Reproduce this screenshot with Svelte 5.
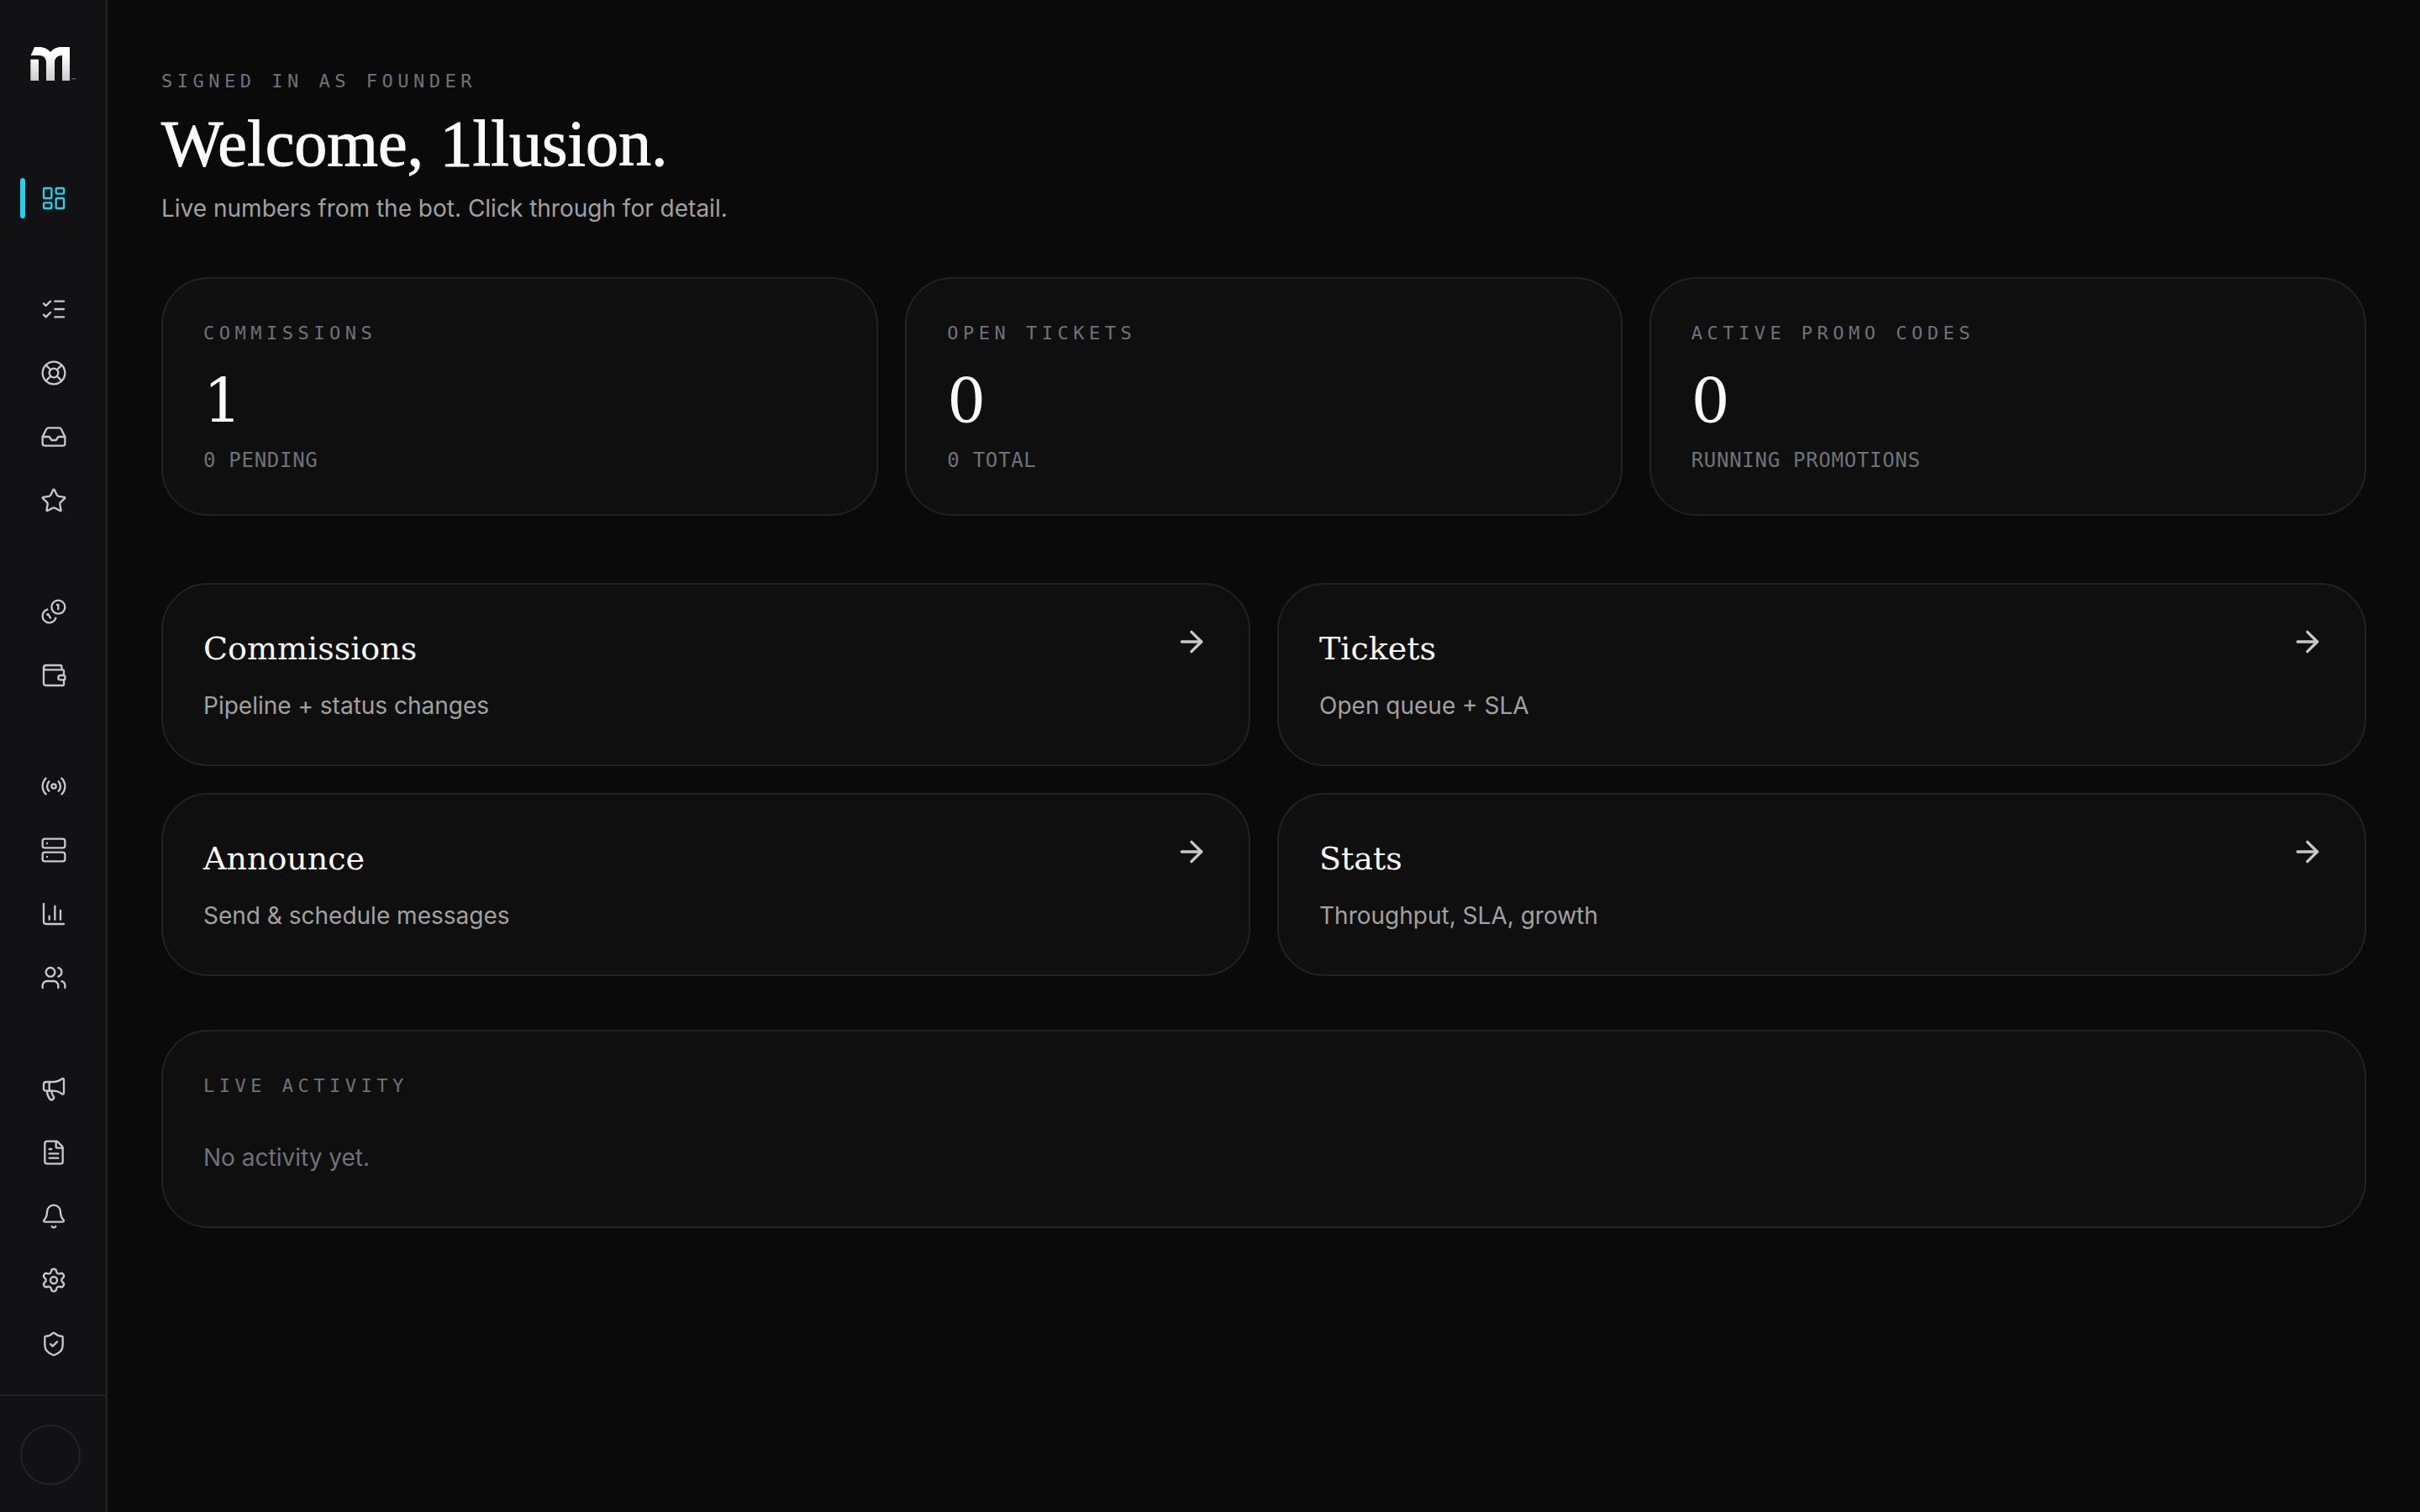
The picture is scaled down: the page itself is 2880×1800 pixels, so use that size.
<script lang="ts">
  type Item = { label: string; href: string; paths: string[] };

  // 24x24 stroke icons, grouped the way the sidebar shows them
  const groups: Item[][] = [
    [
      {
        label: "Dashboard",
        href: "#dashboard",
        paths: [
          "M4 3h5a1 1 0 0 1 1 1v7a1 1 0 0 1-1 1H4a1 1 0 0 1-1-1V4a1 1 0 0 1 1-1z",
          "M15 3h5a1 1 0 0 1 1 1v3a1 1 0 0 1-1 1h-5a1 1 0 0 1-1-1V4a1 1 0 0 1 1-1z",
          "M15 12h5a1 1 0 0 1 1 1v7a1 1 0 0 1-1 1h-5a1 1 0 0 1-1-1v-7a1 1 0 0 1 1-1z",
          "M4 16h5a1 1 0 0 1 1 1v3a1 1 0 0 1-1 1H4a1 1 0 0 1-1-1v-3a1 1 0 0 1 1-1z",
        ],
      },
    ],
    [
      {
        label: "Commissions",
        href: "#commissions",
        paths: ["M13 5h8", "M13 12h8", "M13 19h8", "m3 17 2 2 4-4", "m3 7 2 2 4-4"],
      },
      {
        label: "Tickets",
        href: "#tickets",
        paths: [
          "M2 12a10 10 0 1 0 20 0a10 10 0 1 0-20 0",
          "m4.93 4.93 4.24 4.24",
          "m14.83 9.17 4.24-4.24",
          "m14.83 14.83 4.24 4.24",
          "m9.17 14.83-4.24 4.24",
          "M8 12a4 4 0 1 0 8 0a4 4 0 1 0-8 0",
        ],
      },
      {
        label: "Inbox",
        href: "#inbox",
        paths: [
          "M22 12h-6l-2 3h-4l-2-3H2",
          "M5.45 5.11 2 12v6a2 2 0 0 0 2 2h16a2 2 0 0 0 2-2v-6l-3.45-6.89A2 2 0 0 0 16.76 4H7.24a2 2 0 0 0-1.79 1.11z",
        ],
      },
      {
        label: "Reviews",
        href: "#reviews",
        paths: [
          "M11.525 2.295a.53.53 0 0 1 .95 0l2.31 4.679a2.123 2.123 0 0 0 1.595 1.16l5.166.756a.53.53 0 0 1 .294.904l-3.736 3.638a2.123 2.123 0 0 0-.611 1.878l.882 5.14a.53.53 0 0 1-.771.56l-4.618-2.428a2.122 2.122 0 0 0-1.973 0L6.396 21.01a.53.53 0 0 1-.77-.56l.881-5.139a2.122 2.122 0 0 0-.611-1.879L2.16 9.795a.53.53 0 0 1 .294-.906l5.165-.755a2.122 2.122 0 0 0 1.597-1.16z",
        ],
      },
    ],
    [
      {
        label: "Earnings",
        href: "#earnings",
        paths: [
          "M13.744 17.736a6 6 0 1 1-7.48-7.48",
          "M15 6h1v4",
          "m6.134 14.768.866-.5 2 3.464",
          "M10 8a6 6 0 1 0 12 0a6 6 0 1 0-12 0",
        ],
      },
      {
        label: "Wallet",
        href: "#wallet",
        paths: [
          "M19 7V4a1 1 0 0 0-1-1H5a2 2 0 0 0 0 4h15a1 1 0 0 1 1 1v4h-3a2 2 0 0 0 0 4h3a1 1 0 0 0 1-1v-2a1 1 0 0 0-1-1",
          "M3 5v14a2 2 0 0 0 2 2h15a1 1 0 0 0 1-1v-4",
        ],
      },
    ],
    [
      {
        label: "Live",
        href: "#live",
        paths: [
          "M16.247 7.761a6 6 0 0 1 0 8.478",
          "M19.075 4.933a10 10 0 0 1 0 14.134",
          "M4.925 19.067a10 10 0 0 1 0-14.134",
          "M7.753 16.239a6 6 0 0 1 0-8.478",
          "M10 12a2 2 0 1 0 4 0a2 2 0 1 0-4 0",
        ],
      },
      {
        label: "Servers",
        href: "#servers",
        paths: [
          "M4 2h16a2 2 0 0 1 2 2v4a2 2 0 0 1-2 2H4a2 2 0 0 1-2-2V4a2 2 0 0 1 2-2z",
          "M4 14h16a2 2 0 0 1 2 2v4a2 2 0 0 1-2 2H4a2 2 0 0 1-2-2v-4a2 2 0 0 1 2-2z",
          "M6 6h.01",
          "M6 18h.01",
        ],
      },
      {
        label: "Stats",
        href: "#stats",
        paths: ["M3 3v16a2 2 0 0 0 2 2h16", "M18 17V9", "M13 17V5", "M8 17v-3"],
      },
      {
        label: "Members",
        href: "#members",
        paths: [
          "M16 21v-2a4 4 0 0 0-4-4H6a4 4 0 0 0-4 4v2",
          "M16 3.128a4 4 0 0 1 0 7.744",
          "M22 21v-2a4 4 0 0 0-3-3.87",
          "M5 7a4 4 0 1 0 8 0a4 4 0 1 0-8 0",
        ],
      },
    ],
    [
      {
        label: "Announce",
        href: "#announce",
        paths: [
          "M11 6a13 13 0 0 0 8.4-2.8A1 1 0 0 1 21 4v12a1 1 0 0 1-1.6.8A13 13 0 0 0 11 14H5a2 2 0 0 1-2-2V8a2 2 0 0 1 2-2z",
          "M6 14a12 12 0 0 0 2.4 7.2 2 2 0 0 0 3.2-2.4A8 8 0 0 1 10 14",
          "M8 6v8",
        ],
      },
      {
        label: "Documents",
        href: "#documents",
        paths: [
          "M6 22a2 2 0 0 1-2-2V4a2 2 0 0 1 2-2h8a2.4 2.4 0 0 1 1.704.706l3.588 3.588A2.4 2.4 0 0 1 20 8v12a2 2 0 0 1-2 2z",
          "M14 2v5a1 1 0 0 0 1 1h5",
          "M10 9H8",
          "M16 13H8",
          "M16 17H8",
        ],
      },
      {
        label: "Notifications",
        href: "#notifications",
        paths: [
          "M10.268 21a2 2 0 0 0 3.464 0",
          "M3.262 15.326A1 1 0 0 0 4 17h16a1 1 0 0 0 .74-1.673C19.41 13.956 18 12.499 18 8A6 6 0 0 0 6 8c0 4.499-1.411 5.956-2.738 7.326",
        ],
      },
      {
        label: "Settings",
        href: "#settings",
        paths: [
          "M9.671 4.136a2.34 2.34 0 0 1 4.659 0 2.34 2.34 0 0 0 3.319 1.915 2.34 2.34 0 0 1 2.33 4.033 2.34 2.34 0 0 0 0 3.831 2.34 2.34 0 0 1-2.33 4.033 2.34 2.34 0 0 0-3.319 1.915 2.34 2.34 0 0 1-4.659 0 2.34 2.34 0 0 0-3.32-1.915 2.34 2.34 0 0 1-2.33-4.033 2.34 2.34 0 0 0 0-3.831A2.34 2.34 0 0 1 6.35 6.051a2.34 2.34 0 0 0 3.319-1.915",
          "M9 12a3 3 0 1 0 6 0a3 3 0 1 0-6 0",
        ],
      },
      {
        label: "Security",
        href: "#security",
        paths: [
          "M20 13c0 5-3.5 7.5-7.66 8.95a1 1 0 0 1-.67-.01C7.5 20.5 4 18 4 13V6a1 1 0 0 1 1-1c2 0 4.5-1.2 6.24-2.72a1.17 1.17 0 0 1 1.52 0C14.51 3.81 17 5 19 5a1 1 0 0 1 1 1z",
          "m9 12 2 2 4-4",
        ],
      },
    ],
  ];

  const stats = [
    { label: "Commissions", value: 1, note: "0 pending" },
    { label: "Open tickets", value: 0, note: "0 total" },
    { label: "Active promo codes", value: 0, note: "Running promotions" },
  ];

  const links = [
    { title: "Commissions", text: "Pipeline + status changes", href: "#commissions" },
    { title: "Tickets", text: "Open queue + SLA", href: "#tickets" },
    { title: "Announce", text: "Send & schedule messages", href: "#announce" },
    { title: "Stats", text: "Throughput, SLA, growth", href: "#stats" },
  ];

  let active = $state("#dashboard");
</script>

<div class="shell">
  <aside class="sidebar">
    <a class="brand" href="#dashboard" aria-label="Home">
      <svg viewBox="0 0 165 120" aria-hidden="true">
        <defs>
          <linearGradient id="mark" gradientUnits="userSpaceOnUse" x1="0" y1="0" x2="0" y2="120">
            <stop offset="0.2" stop-color="#ffffff" />
            <stop offset="1" stop-color="#cccccc" />
          </linearGradient>
        </defs>
        <path
          fill="url(#mark)"
          d="M15 0H32C50 0 62 7 72 18C82 7 94 0 110 0H141V120H114V30C97 30 87 40 87 55V120H57V55C57 40 48 30 31 30H2Z"
        />
        <path fill="url(#mark)" d="M1 44H30V120H1Z" />
        <path fill="#6b6b6e" d="M147 111H153V113H151V117H149V113H147ZM154 111H162V117H160V114H156V117H154Z" />
      </svg>
    </a>

    <nav aria-label="Main">
      {#each groups as group}
        <div class="group">
          {#each group as item (item.href)}
            <a
              class="item"
              class:on={active === item.href}
              href={item.href}
              aria-label={item.label}
              title={item.label}
              onclick={() => (active = item.href)}
            >
              <svg class="icon" viewBox="0 0 24 24" aria-hidden="true">
                {#each item.paths as d}
                  <path {d} />
                {/each}
              </svg>
            </a>
          {/each}
        </div>
      {/each}
    </nav>

    <div class="account">
      <button type="button" class="avatar" aria-label="Account"></button>
    </div>
  </aside>

  <main>
    <header>
      <p class="eyebrow">Signed in as founder</p>
      <h1>Welcome, 1llusion.</h1>
      <p class="lead">Live numbers from the bot. Click through for detail.</p>
    </header>

    <section class="stats">
      {#each stats as s (s.label)}
        <article class="card">
          <p class="eyebrow">{s.label}</p>
          <p class="value">{s.value}</p>
          <p class="note">{s.note}</p>
        </article>
      {/each}
    </section>

    <section class="links">
      {#each links as l (l.title)}
        <a class="card link" href={l.href}>
          <div>
            <h2>{l.title}</h2>
            <p class="text">{l.text}</p>
          </div>
          <svg class="arrow" viewBox="0 0 24 24" aria-hidden="true">
            <path d="M5 12h14" />
            <path d="m12 5 7 7-7 7" />
          </svg>
        </a>
      {/each}
    </section>

    <section class="card">
      <h3 class="eyebrow">Live activity</h3>
      <p class="empty">No activity yet.</p>
    </section>
  </main>
</div>

<style>
  :global(body) {
    margin: 0;
    background: #0a0a0a;
  }
  .shell {
    --ink: #fafafa;
    --muted: #a1a1a1;
    --faint: #71717a;
    --line: #222222;
    --accent: #22d3ee;
    --serif: "DejaVu Serif", serif;
    --mono: "DejaVu Sans Mono", monospace;
    display: flex;
    min-height: 100vh;
    color: var(--ink);
    background: #0a0a0a;
    font-family: Inter, sans-serif;
    font-size: 28px;
    line-height: 44px;
  }
  h1,
  h2,
  h3,
  p {
    margin: 0;
    font-weight: 400;
  }

  .sidebar {
    box-sizing: border-box;
    flex: none;
    display: flex;
    flex-direction: column;
    width: 128px;
    background: #121214;
    border-right: 2px solid #242426;
  }
  .brand {
    display: flex;
    padding: 56px 0 104px 36px;
  }
  .brand svg {
    width: 55px;
    height: 40px;
  }
  nav {
    flex: 1;
    display: flex;
    flex-direction: column;
    gap: 60px;
    padding: 0 24px 24px;
  }
  .group {
    display: flex;
    flex-direction: column;
    gap: 4px;
  }
  .item {
    position: relative;
    display: flex;
    align-items: center;
    height: 72px;
    padding-left: 24px;
    color: #c8c8cb;
  }
  .item:hover {
    color: var(--ink);
  }
  .item.on {
    color: var(--accent);
  }
  .item.on::before {
    content: "";
    position: absolute;
    left: 0;
    top: 12px;
    width: 6px;
    height: 48px;
    border-radius: 3px;
    background: var(--accent);
  }
  .icon,
  .arrow {
    flex: none;
    fill: none;
    stroke: currentColor;
    stroke-linecap: round;
    stroke-linejoin: round;
  }
  .icon {
    width: 32px;
    height: 32px;
    stroke-width: 1.75;
  }
  .account {
    padding: 34px 24px 32px;
    border-top: 2px solid #242426;
  }
  .avatar {
    display: block;
    box-sizing: border-box;
    width: 72px;
    height: 72px;
    padding: 0;
    border: 2px solid #242426;
    border-radius: 50%;
    background: transparent;
    cursor: pointer;
  }

  main {
    flex: 1;
    min-width: 0;
    padding: 80px 64px;
  }
  header {
    margin-bottom: 60px;
  }
  .eyebrow {
    font-family: var(--mono);
    font-size: 22px;
    line-height: 34px;
    letter-spacing: 0.25em;
    text-transform: uppercase;
    color: var(--faint);
  }
  h1 {
    margin-top: 18px;
    font-family: "Liberation Serif", serif;
    font-size: 78px;
    line-height: 78px;
    -webkit-text-stroke: 1px currentColor;
  }
  .lead {
    margin-top: 16px;
    color: var(--muted);
  }
  .card {
    box-sizing: border-box;
    padding: 48px;
    background: #0f0f0f;
    border: 2px solid var(--line);
    border-radius: 56px;
  }
  .stats {
    display: grid;
    grid-template-columns: repeat(3, 1fr);
    gap: 32px;
    margin-bottom: 80px;
  }
  .value {
    margin: 22px 0 12px;
    font-family: var(--serif);
    font-size: 72px;
    line-height: 84px;
  }
  .note {
    font-family: var(--mono);
    font-size: 24px;
    line-height: 32px;
    letter-spacing: 0.03em;
    text-transform: uppercase;
    color: var(--faint);
  }
  .links {
    display: grid;
    grid-template-columns: repeat(2, 1fr);
    gap: 32px;
    margin-bottom: 64px;
  }
  .link {
    display: flex;
    justify-content: space-between;
    color: inherit;
    text-decoration: none;
  }
  .link:hover {
    border-color: #333333;
  }
  h2 {
    margin-bottom: 18px;
    font-family: var(--serif);
    font-size: 38px;
    line-height: 56px;
  }
  .text {
    color: var(--muted);
  }
  .arrow {
    width: 40px;
    height: 40px;
    color: #c8c8cb;
    stroke-width: 2;
  }
  .empty {
    padding: 46px 0 12px;
    color: var(--faint);
  }
</style>
